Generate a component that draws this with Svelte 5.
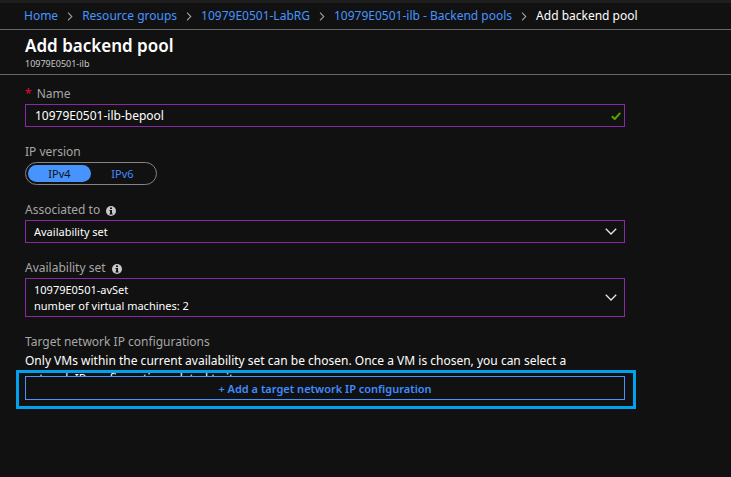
<script>
  const trail = ['Home', 'Resource groups', '10979E0501-LabRG', '10979E0501-ilb - Backend pools'];
  let name = $state('10979E0501-ilb-bepool');
  let version = $state('IPv4');
  let associated = $state('Availability set');
  let avset = $state('10979E0501-avSet');
</script>

{#snippet info()}
  <svg class="info" viewBox="0 0 10 10" aria-hidden="true">
    <circle cx="5" cy="5" r="5" fill="#c8c8c8" />
    <path d="M4 1.5h2v1.6H4zM3.5 4H6v3.4h.7v1H3.4v-1h.7V5h-.6z" fill="#111" />
  </svg>
{/snippet}

{#snippet chevron()}
  <svg class="chevron" viewBox="0 0 12 7" aria-hidden="true">
    <path d="M.8 .8 6 6 11.2 .8" fill="none" stroke="#e6e6e6" stroke-width="1.3" />
  </svg>
{/snippet}

<div class="blade">
  <nav aria-label="Breadcrumb">
    {#each trail as item}
      <a href="#top">{item}</a>
      <svg class="sep" viewBox="0 0 6 10" aria-hidden="true">
        <path d="M.8 .8 5 5 .8 9.2" fill="none" stroke="#a0a0a0" stroke-width="1.2" />
      </svg>
    {/each}
    <span>Add backend pool</span>
  </nav>

  <header>
    <h1>Add backend pool</h1>
    <p>10979E0501-ilb</p>
  </header>

  <form onsubmit={(e) => e.preventDefault()}>
    <div class="field">
      <label for="name"><span class="req">*</span>Name</label>
      <div class="control">
        <input id="name" class="box name" type="text" bind:value={name} />
        <svg class="check" viewBox="0 0 10 8" aria-hidden="true">
          <path d="M.8 4.2 3.8 7 9.3 .8" fill="none" stroke="#57a300" stroke-width="2" />
        </svg>
      </div>
    </div>

    <fieldset class="field">
      <legend>IP version</legend>
      <div class="pill">
        {#each ['IPv4', 'IPv6'] as v}
          <label class="option" class:on={version === v}>
            <input type="radio" name="version" value={v} bind:group={version} />{v}
          </label>
        {/each}
      </div>
    </fieldset>

    <div class="field">
      <label for="associated">Associated to {@render info()}</label>
      <div class="control">
        <select id="associated" class="box" bind:value={associated}>
          <option>Availability set</option>
          <option>Single virtual machine</option>
        </select>
        {@render chevron()}
      </div>
    </div>

    <div class="field">
      <label for="avset">Availability set {@render info()}</label>
      <div class="control">
        <select id="avset" class="box tall" bind:value={avset} aria-describedby="avset-note">
          <option>10979E0501-avSet</option>
        </select>
        <span id="avset-note" class="note">number of virtual machines: 2</span>
        {@render chevron()}
      </div>
    </div>

    <section>
      <h2>Target network IP configurations</h2>
      <p class="hint">
        Only VMs within the current availability set can be chosen. Once a VM is chosen, you can
        select a network IP configuration related to it.
      </p>
      <div class="target">
        <button type="button">+ Add a target network IP configuration</button>
      </div>
    </section>
  </form>
</div>

<style>
  :global(body) {
    margin: 0;
    background: #111;
  }
  .blade {
    box-sizing: border-box;
    min-height: 100vh;
    border-top: 3px solid #1e1e1e;
    background: #111;
    color: #fff;
    font: 12px/16px 'Noto Sans', 'Open Sans', sans-serif;
  }
  nav {
    display: flex;
    align-items: center;
    gap: 9px;
    height: 26px;
    padding-left: 24px;
    border-bottom: 1px solid #666;
    white-space: nowrap;
  }
  a {
    color: #4894fe;
    text-decoration: none;
  }
  .sep {
    width: 6px;
    height: 9px;
  }
  header {
    padding: 4px 25px;
    border-bottom: 1px solid #666;
  }
  h1 {
    margin: 0;
    font-size: 17px;
    font-weight: 600;
    line-height: 24px;
  }
  header p {
    margin: 0;
    color: #c8c8c8;
    font-size: 9px;
    line-height: 12px;
  }
  form {
    display: flex;
    flex-direction: column;
    gap: 15px;
    max-width: 600px;
    padding: 9px 25px;
  }
  .field {
    min-width: 0;
    margin: 0;
    padding: 0;
    border: 0;
  }
  .field > label,
  legend,
  h2 {
    display: flex;
    align-items: center;
    height: 20px;
    margin: 0;
    padding: 0;
    color: #a6a6a6;
    font-size: 12px;
    font-weight: 400;
  }
  .req {
    margin-right: 5px;
    color: #e0102b;
  }
  .info {
    width: 10px;
    height: 10px;
    margin: 2px 0 0 6px;
  }
  .control {
    display: grid;
    align-items: center;
  }
  .control > * {
    grid-area: 1 / 1;
  }
  .box {
    box-sizing: border-box;
    width: 100%;
    height: 23px;
    padding: 0 32px 0 8px;
    border: 1px solid #8b28a8;
    border-radius: 0;
    outline: 0;
    appearance: none;
    background: #111;
    color: #fff;
    font: 11px/16px 'Noto Sans', 'Open Sans', sans-serif;
  }
  .name {
    padding-left: 9px;
    font-size: 12px;
  }
  .tall {
    height: 39px;
    padding-bottom: 16px;
  }
  .note {
    align-self: end;
    padding: 0 9px 3px;
    font-size: 11px;
    pointer-events: none;
  }
  .check,
  .chevron {
    justify-self: end;
    pointer-events: none;
  }
  .check {
    width: 10px;
    height: 8px;
    margin-right: 4px;
  }
  .chevron {
    width: 12px;
    height: 7px;
    margin-right: 8px;
  }
  .pill {
    display: flex;
    box-sizing: border-box;
    width: 132px;
    height: 23px;
    padding: 2px;
    border: 1px solid #848484;
    border-radius: 12px;
  }
  .option {
    flex: 1;
    border-radius: 9px;
    color: #3f8cff;
    font-size: 11px;
    line-height: 17px;
    text-align: center;
    cursor: pointer;
  }
  .option.on {
    background: #4894fe;
    color: #111;
  }
  .option input {
    position: absolute;
    opacity: 0;
    width: 1px;
    height: 1px;
    margin: 0;
  }
  .hint {
    height: 24px;
    margin: 0;
    padding-right: 40px;
    line-height: 18px;
  }
  .target {
    position: relative;
  }
  .target::after {
    position: absolute;
    inset: -6px -11px -9px -9px;
    border: 3px solid #00a2ed;
    content: '';
    pointer-events: none;
  }
  button {
    display: block;
    width: 100%;
    height: 24px;
    padding: 1px 0 0;
    border: 1px solid #4894fe;
    background: #111;
    color: #3f8cff;
    font: 600 11px/16px 'Noto Sans', 'Open Sans', sans-serif;
    cursor: pointer;
  }
</style>
